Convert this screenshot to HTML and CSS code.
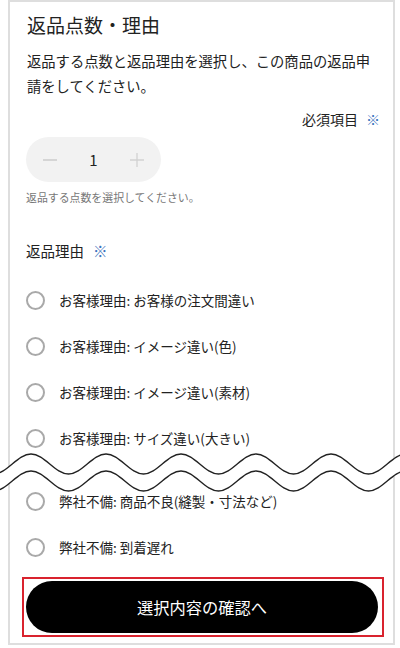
FILE: index.html
```html
<!DOCTYPE html>
<html lang="ja">
<head>
<meta charset="utf-8">
<link rel="stylesheet" href="styles.css">
</head>
<body>
<div class="card">
  <h1 class="title">返品点数・理由</h1>
  <p class="desc">返品する点数と返品理由を選択し、この商品の返品申請をしてください。</p>
  <p class="required">必須項目<span class="mark">※</span></p>
  <div class="stepper">
    <svg class="step-icon" width="14" height="14" viewBox="0 0 14 14"><path d="M0 7H14" stroke="#cbcbcb" stroke-width="1.5"/></svg>
    <span class="qty">1</span>
    <svg class="step-icon" width="14" height="14" viewBox="0 0 14 14"><path d="M0 7H14M7 0V14" stroke="#d2d2d2" stroke-width="1.3"/></svg>
  </div>
  <p class="help">返品する点数を選択してください。</p>
  <h2 class="label">返品理由<span class="mark">※</span></h2>
  <ul class="reasons">
    <li class="reason"><span class="radio"></span><span>お客様理由: お客様の注文間違い</span></li>
    <li class="reason"><span class="radio"></span><span>お客様理由: イメージ違い(色)</span></li>
    <li class="reason"><span class="radio"></span><span>お客様理由: イメージ違い(素材)</span></li>
    <li class="reason"><span class="radio"></span><span>お客様理由: サイズ違い(大きい)</span></li>
    <li class="reason reason-after-break"><span class="radio"></span><span>弊社不備: 商品不良(縫製・寸法など)</span></li>
    <li class="reason"><span class="radio"></span><span>弊社不備: 到着遅れ</span></li>
  </ul>
  <div class="highlight">
    <button class="submit" type="button">選択内容の確認へ</button>
  </div>
  <svg class="wave" width="400" height="60" viewBox="0 0 400 60">
    <path fill="#fff" d="M-44 13 c13.5 0 24 20 37.5 20 s24 -20 37.5 -20 s24 20 37.5 20 s24 -20 37.5 -20 s24 20 37.5 20 s24 -20 37.5 -20 s24 20 37.5 20 s24 -20 37.5 -20 s24 20 37.5 20 s24 -20 37.5 -20 s24 20 37.5 20 s24 -20 37.5 -20 s24 20 37.5 20 s24 -20 37.5 -20 L481 30 c-13.5 0 -24 20 -37.5 20 s-24 -20 -37.5 -20 s-24 20 -37.5 20 s-24 -20 -37.5 -20 s-24 20 -37.5 20 s-24 -20 -37.5 -20 s-24 20 -37.5 20 s-24 -20 -37.5 -20 s-24 20 -37.5 20 s-24 -20 -37.5 -20 s-24 20 -37.5 20 s-24 -20 -37.5 -20 s-24 20 -37.5 20 s-24 -20 -37.5 -20 Z"/>
    <path fill="none" stroke="#222" stroke-width="1.4" d="M-44 13 c13.5 0 24 20 37.5 20 s24 -20 37.5 -20 s24 20 37.5 20 s24 -20 37.5 -20 s24 20 37.5 20 s24 -20 37.5 -20 s24 20 37.5 20 s24 -20 37.5 -20 s24 20 37.5 20 s24 -20 37.5 -20 s24 20 37.5 20 s24 -20 37.5 -20 s24 20 37.5 20 s24 -20 37.5 -20"/>
    <path fill="none" stroke="#222" stroke-width="1.4" d="M-44 30 c13.5 0 24 20 37.5 20 s24 -20 37.5 -20 s24 20 37.5 20 s24 -20 37.5 -20 s24 20 37.5 20 s24 -20 37.5 -20 s24 20 37.5 20 s24 -20 37.5 -20 s24 20 37.5 20 s24 -20 37.5 -20 s24 20 37.5 20 s24 -20 37.5 -20 s24 20 37.5 20 s24 -20 37.5 -20"/>
  </svg>
</div>
</body>
</html>
```
FILE: styles.css
```css
* { box-sizing: border-box; }
html, body { margin: 0; padding: 0; background: #fff; }
body {
  font-family: "Noto Sans CJK JP", "Noto Sans", sans-serif;
  color: #222;
  width: 400px;
  height: 648px;
  overflow: hidden;
}
.card {
  position: relative;
  margin-left: 8px;
  width: 387px;
  height: 645px;
  border: 2px solid #dedede;
  padding: 10px 17px 0 17px;
  display: flex;
  flex-direction: column;
  align-items: flex-start;
}
.title {
  margin: 0;
  font-size: 19px;
  font-weight: 400;
  line-height: 26px;
}
.desc {
  margin: 10px 0 0;
  font-size: 14.3px;
  line-height: 25px;
}
.required {
  align-self: stretch;
  text-align: right;
  margin: 11px -4px 0 0;
  font-size: 14px;
  line-height: 20px;
}
.mark {
  color: #3a72bd;
  margin-left: 8px;
}
.stepper {
  margin: 8px 0 0 -1px;
  width: 135px;
  height: 45px;
  border-radius: 23px;
  background: #f2f2f2;
  display: flex;
  align-items: center;
  justify-content: space-between;
  padding: 0 17px;
}
.step-icon { display: block; }
.qty {
  font-size: 15px;
  line-height: 20px;
  color: #222;
}
.help {
  margin: 7px 0 0 -1px;
  font-size: 10.9px;
  line-height: 16px;
  color: #777;
}
.label {
  margin: 35px 0 0 -1px;
  font-size: 14.5px;
  font-weight: 400;
  line-height: 22px;
}
.label .mark { margin-left: 9px; }
.reasons {
  list-style: none;
  margin: 15px 0 0 -1px;
  padding: 0;
}
.reason {
  height: 46px;
  display: flex;
  align-items: center;
  gap: 14px;
  font-size: 13.5px;
  line-height: 20px;
  color: #222;
}
.reason-after-break { margin-top: 17px; }
.radio {
  width: 19px;
  height: 19px;
  border: 2px solid #a9a9a9;
  border-radius: 50%;
  flex: none;
}
.highlight {
  margin: 7px 0 0 -5px;
  width: 362px;
  border: 2px solid #d9232e;
  padding: 2px 4px 2px 2px;
}
.submit {
  display: block;
  width: 100%;
  height: 52px;
  border: none;
  border-radius: 26px;
  background: #000;
  color: #fff;
  font-family: "Noto Sans CJK JP", "Noto Sans", sans-serif;
  font-size: 16.25px;
  line-height: 22px;
  padding: 0;
}
.wave {
  position: absolute;
  top: 439px;
  left: -10px;
  display: block;
}
```
